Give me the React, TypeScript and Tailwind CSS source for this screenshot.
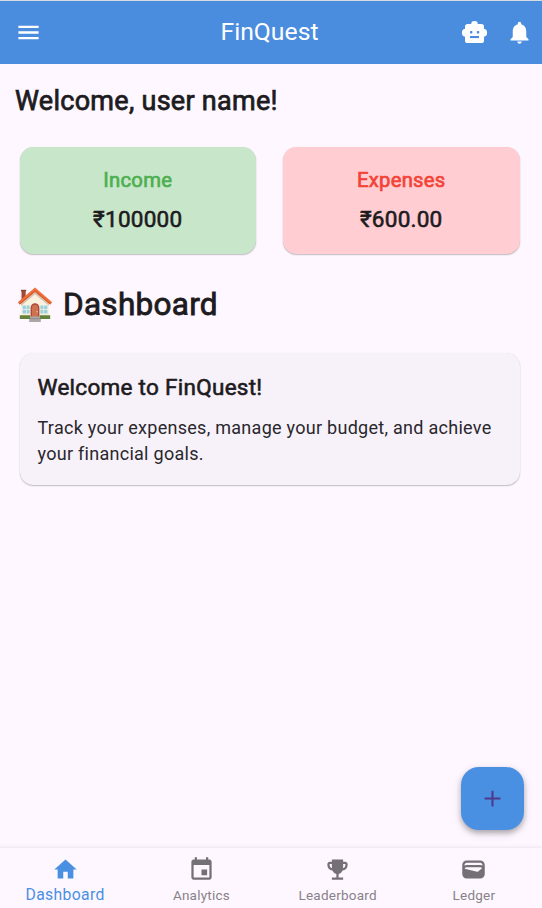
import React from "react";

const cardShadow = "shadow-[0_1px_1.5px_rgba(0,0,0,0.24),0_0_1px_rgba(0,0,0,0.1)]";

function Icon({ d, className = "" }: { d: string; className?: string }) {
  return (
    <svg viewBox="0 0 24 24" className={`size-[27px] shrink-0 ${className}`} fill="currentColor">
      <path d={d} />
    </svg>
  );
}

function RobotIcon() {
  return (
    <svg viewBox="0 0 27 27" className="size-[27px] shrink-0">
      <g fill="#fff">
        <circle cx="13.5" cy="5.4" r="3.4" />
        <circle cx="4.8" cy="13.7" r="3.9" />
        <circle cx="22.2" cy="13.7" r="3.9" />
        <rect x="4" y="5" width="19" height="19" rx="2.6" />
      </g>
      <g fill="#4a8cde">
        <rect x="9" y="12" width="2.4" height="2.4" rx="0.7" />
        <rect x="15.8" y="12" width="2.4" height="2.4" rx="0.7" />
        <rect x="9" y="17" width="9" height="2.1" />
      </g>
    </svg>
  );
}

function House() {
  return (
    <svg viewBox="0 0 36 36" className="h-9 w-9 shrink-0">
      <path d="M4.5 3.5h4.2v11H4.5z" fill="#a34a32" />
      <path d="M4 2.8h5.2v1.5H4z" fill="#7d4638" />
      <path d="M4 16L18 3.5 32 16v16H4z" fill="#fbf1df" />
      <path d="M4 16L18 3.5 32 16v3L18 7.2 4 19z" fill="#d5c4b0" />
      <path d="M18 .5L.8 15.2l2 2.3L18 4.7l15.2 12.8 2-2.3z" fill="#f0703a" />
      <path d="M2.8 17.5L18 4.7l15.2 12.8.7-.8L18 3.4 2.1 16.7z" fill="#d7552a" />
      <g fill="#9ad0df">
        <path d="M5.6 18.6h3.3v3.5H5.6zM9.6 18.6h3v3.5h-3zM5.6 22.8h3.3v3.6H5.6zM9.6 22.8h3v3.6h-3z" />
        <path d="M23.4 18.6h3v3.5h-3zM27.1 18.6h3.3v3.5h-3.3zM23.4 22.8h3v3.6h-3zM27.1 22.8h3.3v3.6h-3.3z" />
      </g>
      <path d="M2.8 28.2h10.5V32H2.8zM22.7 28.2h10.5V32H22.7z" fill="#66833b" />
      <path d="M13.6 30V20.6a4.4 4.4 0 018.8 0V30z" fill="#a94c35" />
      <path d="M15 30v-9.2a3 3 0 016 0V30z" fill="#cf7051" />
      <circle cx="20.2" cy="24.8" r=".8" fill="#f4c56b" />
      <path d="M13 29.6h10v2.2h.8v3.2H12.2v-3.2h.8z" fill="#aaa7a7" />
      <path d="M13 31.4h10v.7H13z" fill="#858181" />
    </svg>
  );
}

const tabs = [
  {
    label: "Dashboard",
    active: true,
    d: "M10 20v-6h4v6h5v-8h3L12 3 2 12h3v8z",
  },
  {
    label: "Analytics",
    active: false,
    d: "M17 12h-5v5h5v-5zM16 1v2H8V1H6v2H5c-1.11 0-1.99.9-1.99 2L3 19c0 1.1.89 2 2 2h14c1.1 0 2-.9 2-2V5c0-1.1-.9-2-2-2h-1V1h-2zm3 18H5V8h14v11z",
  },
  {
    label: "Leaderboard",
    active: false,
    d: "M19 5h-2V3H7v2H5c-1.1 0-2 .9-2 2v1c0 2.55 1.92 4.63 4.39 4.94A5.01 5.01 0 0011 15.9V19H7v2h10v-2h-4v-3.1a5.01 5.01 0 003.61-2.96C19.08 12.63 21 10.55 21 8V7c0-1.1-.9-2-2-2zM5 8V7h2v3.82C5.84 10.4 5 9.3 5 8zm14 0c0 1.3-.84 2.4-2 2.82V7h2v1z",
  },
  {
    label: "Ledger",
    active: false,
    d: "M18 4H6C3.79 4 2 5.79 2 8v8c0 2.21 1.79 4 4 4h12c2.21 0 4-1.79 4-4V8c0-2.21-1.79-4-4-4zm-1.86 9.77c-.24.2-.57.28-.88.2L4.15 11.25C4.45 10.52 5.16 10 6 10h12c.67 0 1.26.34 1.63.84l-3.49 2.93zM6 6h12c1.1 0 2 .9 2 2v.55C19.41 8.21 18.73 8 18 8H6c-.73 0-1.41.21-2 .55V8c0-1.1.9-2 2-2z",
  },
];

function Stat({ title, value, box, tone }: { title: string; value: string; box: string; tone: string }) {
  return (
    <div className={`flex h-[107px] flex-1 flex-col items-center rounded-[13.5px] pt-[18px] ${cardShadow} ${box}`}>
      <div className={`text-[20.25px] leading-[30px] tracking-[0.25px] [-webkit-text-stroke:0.65px_currentColor] ${tone}`}>
        {title}
      </div>
      <div className="mt-[9px] text-[22.5px] leading-[30px] tracking-[0.25px] [-webkit-text-stroke:0.6px_currentColor]">
        {value}
      </div>
    </div>
  );
}

export default function App() {
  return (
    <div className="h-[908px] w-[542px] overflow-hidden bg-[#fef7ff] font-[Roboto,sans-serif] text-[#1d1b20]">
      <div className="-ml-[3px] flex h-full w-[545px] flex-col">
        <header className="flex h-16 shrink-0 items-center border-t border-[#d5dbe0] bg-[#4a8cde] px-[9px] text-white">
          <div className="flex w-[108px] pl-[9px]">
            <Icon d="M3 18.1h18v-2.2H3v2.2zm0-5h18v-2.2H3v2.2zm0-7.2v2.2h18V5.9H3z" />
          </div>
          <h1 className="flex-1 pb-[2px] text-center text-[24.75px] leading-8">FinQuest</h1>
          <div className="flex w-[108px] justify-end gap-[18px]">
            <RobotIcon />
            <Icon d="M12 22c1.1 0 2-.9 2-2h-4c0 1.1.89 2 2 2zm6-6v-5c0-3.07-1.64-5.64-4.5-6.32V4c0-.83-.67-1.5-1.5-1.5s-1.5.67-1.5 1.5v.68C7.63 5.36 6 7.92 6 11v5l-2 2v1h16v-1l-2-2z" />
          </div>
        </header>

        <main className="flex flex-1 flex-col px-[18px]">
          <h2 className="mt-[19px] text-[27px] leading-9 tracking-[0.28px] [-webkit-text-stroke:0.75px_currentColor]">
            Welcome, user name!
          </h2>
          <div className="mt-7 flex gap-[27px] px-[4.5px]">
            <Stat title="Income" value="₹100000" box="bg-[#c8e6c9]" tone="text-[#4caf50]" />
            <Stat title="Expenses" value="₹600.00" box="bg-[#ffcdd2]" tone="text-[#f44336]" />
          </div>
          <div className="mt-[30.5px] flex h-10 items-center gap-[10px] pl-[2px]">
            <House />
            <h2 className="text-[31.5px] leading-10 tracking-[0.28px] [-webkit-text-stroke:0.85px_currentColor]">Dashboard</h2>
          </div>
          <section className={`mx-[4.5px] mt-[28.5px] h-[132px] rounded-[13.5px] bg-[#f7f2fa] px-[18px] pt-[19px] ${cardShadow}`}>
            <h3 className="text-[22.5px] leading-[30px] tracking-[0.28px] [-webkit-text-stroke:0.6px_currentColor]">
              Welcome to FinQuest!
            </h3>
            <p className="mt-[13px] text-[18px] leading-[26px] tracking-[0.275px] text-[#29272c]">
              Track your expenses, manage your budget, and achieve your financial goals.
            </p>
          </section>
          <div className="mt-auto mb-[18px] flex justify-end">
            <button
              aria-label="Add"
              className="flex size-[63px] items-center justify-center rounded-[18px] bg-[#4a90e2] text-[#4f378b] shadow-[0_3px_5px_rgba(0,0,0,0.22),0_3px_10px_rgba(0,0,0,0.16)]"
            >
              <Icon d="M19 12.9h-6.1V19h-1.8v-6.1H5v-1.8h6.1V5h1.8v6.1H19z" />
            </button>
          </div>
        </main>

        <nav className="grid h-[60px] shrink-0 grid-cols-4 shadow-[0_-1px_3px_rgba(0,0,0,0.08)]">
          {tabs.map((t) => (
            <div
              key={t.label}
              className={`flex flex-col items-center pt-2 ${t.active ? "text-[#4a90e2]" : "text-[#757075]"}`}
            >
              <Icon d={t.d} />
              <span
                className={
                  t.active
                    ? "mt-[1px] text-[15.75px] leading-[22px] tracking-[0.34px]"
                    : "mt-[2px] text-[13.5px] leading-5 tracking-[0.22px] text-[#878288]"
                }
              >
                {t.label}
              </span>
            </div>
          ))}
        </nav>
      </div>
    </div>
  );
}
